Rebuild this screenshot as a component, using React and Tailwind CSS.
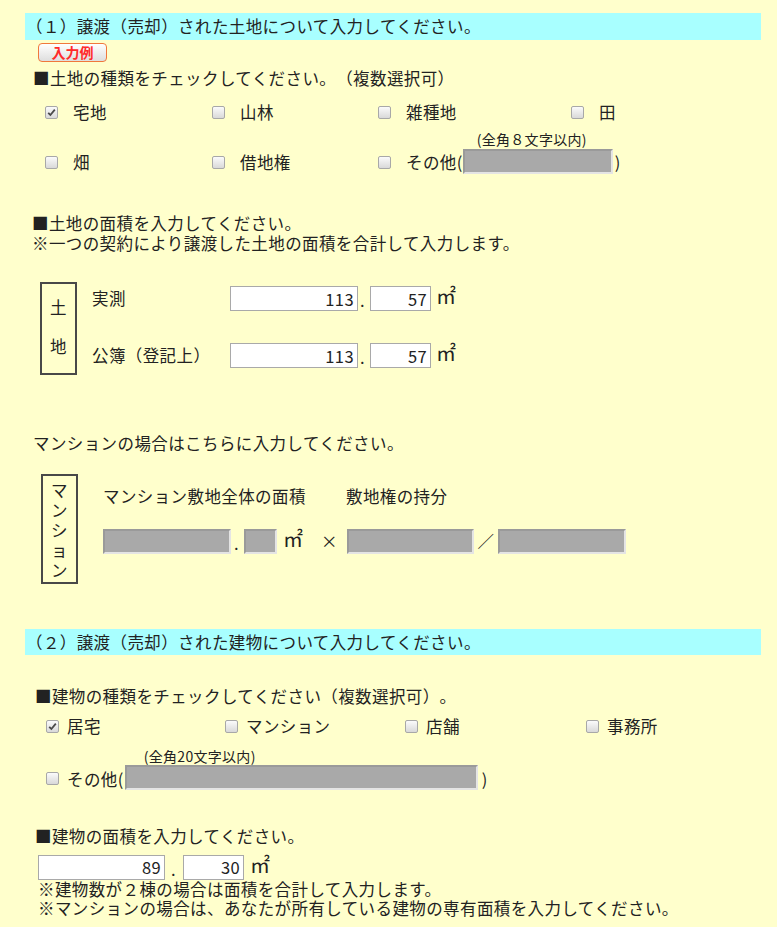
import React from 'react';

function Check({ checked }) {
  return (
    <span className="w-[13px] h-[13px] shrink-0 rounded-[2px] border border-[#a8a8a8] bg-linear-to-b from-[#fbfbfb] to-[#d9d9d9] flex items-center justify-center">
      {checked && (
        <svg width="11" height="11" viewBox="0 0 11 11">
          <path d="M2.2 5.8 L4.4 8 L8.8 2.6" fill="none" stroke="#4a4a4a" strokeWidth="1.8" />
        </svg>
      )}
    </span>
  );
}

function Field({ value, w, gray }) {
  if (gray) {
    return (
      <input
        readOnly
        value=""
        className={`${w} h-[25px] shrink-0 bg-[#a9a9a9] border-2 border-t-[#9a9a9a] border-l-[#9a9a9a] border-b-[#e4e4e4] border-r-[#e4e4e4] outline-none`}
      />
    );
  }
  return (
    <input
      readOnly
      value={value}
      className={`${w} h-[25px] shrink-0 bg-white border border-[#a9a9a9] text-right pr-[3px] text-[16.5px] text-[#222] outline-none`}
    />
  );
}

function Item({ checked, label, gap = 'gap-[15px]' }) {
  return (
    <div className={`flex items-center h-[24px] ${gap}`}>
      <Check checked={checked} />
      <span className="leading-[24px]">{label}</span>
    </div>
  );
}

function Sqm({ ml }) {
  return <span className={`${ml} text-[20px] leading-[20px] tracking-normal`}>㎡</span>;
}

export default function App() {
  return (
    <div className="min-h-[927px] bg-[#ffffcc] pt-[13px] text-[16.5px] tracking-[0.4px] text-[#222] [text-spacing-trim:space-all] font-['Noto_Sans_CJK_JP',sans-serif]">
      <div className="ml-[25px] w-[736px] h-[27px] bg-[#a8ffff] pl-[1px] flex items-center leading-[27px]">
        （１）譲渡（売却）された土地について入力してください。
      </div>

      <div className="ml-[38px] mt-[3px] w-[69px] h-[19px] rounded-[4px] border border-[#f0783c] bg-linear-to-b from-white to-[#dedede] flex items-center justify-center text-[14px] tracking-normal font-bold text-[#ff2a2a] leading-[17px]">
        入力例
      </div>

      <div className="ml-[33px] mt-[6px] h-[20px] leading-[20px]">■土地の種類をチェックしてください。（複数選択可）</div>

      <div className="ml-[45px] mt-[12px] grid grid-cols-[167px_166px_193px_1fr]">
        <Item checked label="宅地" />
        <Item label="山林" />
        <Item label="雑種地" />
        <Item label="田" />
      </div>

      <div className="ml-[45px] mt-[8px] grid grid-cols-[167px_166px_1fr] items-end">
        <Item label="畑" />
        <Item label="借地権" />
        <div className="flex items-end">
          <div className="flex items-center h-[24px] gap-[15px]">
            <Check />
            <span className="leading-[24px]">その他(</span>
          </div>
          <div className="flex flex-col">
            <span className="ml-[14px] h-[15px] text-[14px] tracking-[0.3px] leading-[15px]">(全角８文字以内)</span>
            <div className="mt-[2px]">
              <Field gray w="w-[150px]" />
            </div>
          </div>
          <span className="ml-[2px] h-[24px] leading-[24px]">)</span>
        </div>
      </div>

      <div className="ml-[32px] mt-[39px] leading-[20px]">
        <div>■土地の面積を入力してください。</div>
        <div>※一つの契約により譲渡した土地の面積を合計して入力します。</div>
      </div>

      <div className="ml-[40px] mt-[29px] flex">
        <div className="w-[37px] h-[93px] border-2 border-[#484848] flex flex-col items-center pt-[13px] gap-[19px] leading-[20px]">
          <span>土</span>
          <span>地</span>
        </div>
        <div className="ml-[15px] pt-[4px] flex flex-col gap-[32px]">
          {['実測', '公簿（登記上）'].map((label) => (
            <div key={label} className="flex items-start h-[25px]">
              <span className="w-[138px] leading-[25px]">{label}</span>
              <Field value="113" w="w-[128px]" />
              <span className="w-[12px] pl-[2px] leading-[28px]">.</span>
              <Field value="57" w="w-[61px]" />
              <Sqm ml="ml-[5px]" />
            </div>
          ))}
        </div>
      </div>

      <div className="ml-[33px] mt-[58px] h-[20px] leading-[20px]">マンションの場合はこちらに入力してください。</div>

      <div className="ml-[41px] mt-[21px] flex">
        <div className="w-[37px] h-[110px] border-2 border-[#484848] flex flex-col items-center pt-[4px] leading-[20px]">
          {['マ', 'ン', 'シ', 'ョ', 'ン'].map((c, i) => (
            <span key={i}>{c}</span>
          ))}
        </div>
        <div className="ml-[25px] pt-[12px]">
          <div className="flex h-[20px] leading-[20px]">
            <span className="w-[243px]">マンション敷地全体の面積</span>
            <span>敷地権の持分</span>
          </div>
          <div className="mt-[23px] flex items-start h-[25px]">
            <Field gray w="w-[128px]" />
            <span className="w-[13px] pl-[3px] leading-[28px]">.</span>
            <Field gray w="w-[33px]" />
            <Sqm ml="ml-[6px]" />
            <span className="ml-[18px] mr-[9px] leading-[24px]">×</span>
            <Field gray w="w-[127px]" />
            <span className="w-[24px] text-center leading-[24px]">／</span>
            <Field gray w="w-[128px]" />
          </div>
        </div>
      </div>

      <div className="ml-[25px] mt-[45px] w-[736px] h-[26px] bg-[#a8ffff] pl-[1px] flex items-center leading-[26px]">
        （２）譲渡（売却）された建物について入力してください。
      </div>

      <div className="ml-[35px] mt-[31px] h-[20px] leading-[20px]">■建物の種類をチェックしてください（複数選択可）。</div>

      <div className="ml-[46px] mt-[8px] grid grid-cols-[179px_180px_181px_1fr]">
        <Item checked label="居宅" gap="gap-[8px]" />
        <Item label="マンション" gap="gap-[8px]" />
        <Item label="店舗" gap="gap-[8px]" />
        <Item label="事務所" gap="gap-[8px]" />
      </div>

      <div className="ml-[46px] mt-[11px] flex items-end">
        <div className="flex items-center h-[24px] gap-[8px]">
          <Check />
          <span className="leading-[24px]">その他(</span>
        </div>
        <div className="ml-[1px] flex flex-col">
          <span className="ml-[19px] h-[14px] text-[14px] tracking-[0.3px] leading-[14px]">(全角20文字以内)</span>
          <div className="mt-[2px]">
            <Field gray w="w-[353px]" />
          </div>
        </div>
        <span className="ml-[4px] h-[24px] leading-[24px]">)</span>
      </div>

      <div className="ml-[35px] mt-[35px] h-[20px] leading-[20px]">■建物の面積を入力してください。</div>

      <div className="ml-[38px] mt-[9px] flex items-start h-[25px]">
        <Field value="89" w="w-[127px]" />
        <span className="w-[18px] pl-[6px] leading-[28px]">.</span>
        <Field value="30" w="w-[61px]" />
        <Sqm ml="ml-[6px]" />
      </div>

      <div className="ml-[38px] leading-[19px] pb-[10px]">
        <div>※建物数が２棟の場合は面積を合計して入力します。</div>
        <div>※マンションの場合は、あなたが所有している建物の専有面積を入力してください。</div>
      </div>
    </div>
  );
}
